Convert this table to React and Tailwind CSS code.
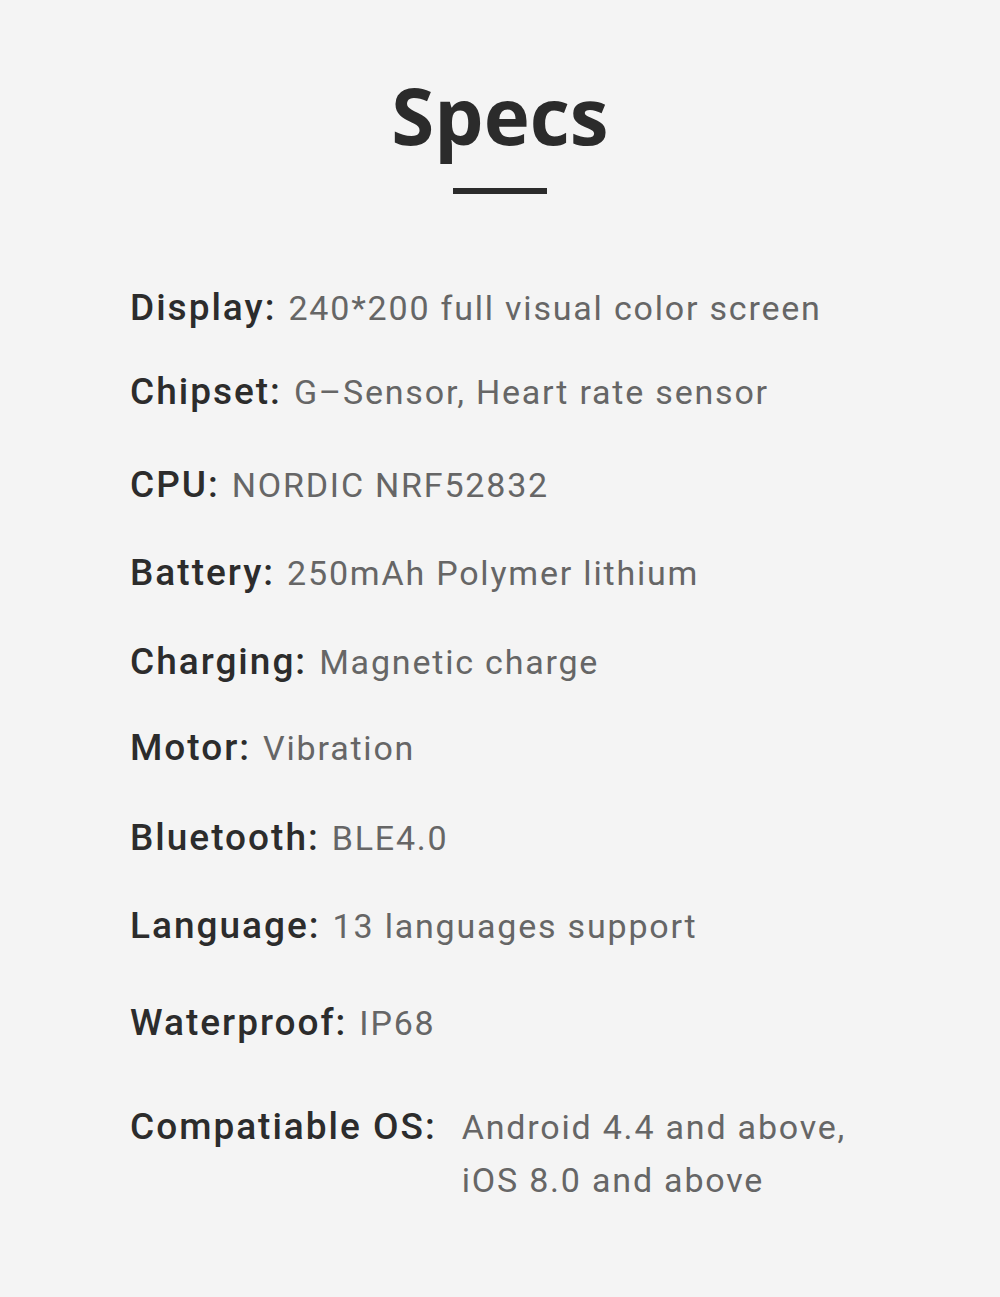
import React from "react";

const specs = [
    { label: "Display:", value: "240*200 full visual color screen", mt: "mt-0" },
    { label: "Chipset:", value: "G–Sensor, Heart rate sensor", mt: "mt-[46px]" },
    { label: "CPU:", value: "NORDIC NRF52832", mt: "mt-[55px]" },
    { label: "Battery:", value: "250mAh Polymer lithium", mt: "mt-[50px]" },
    { label: "Charging:", value: "Magnetic charge", mt: "mt-[51px]" },
    { label: "Motor:", value: "Vibration", mt: "mt-[48px]" },
    { label: "Bluetooth:", value: "BLE4.0", mt: "mt-[52px]" },
    { label: "Language:", value: "13 languages support", mt: "mt-[50px]" },
    { label: "Waterproof:", value: "IP68", mt: "mt-[59px]" },
];

export default function App() {
    return (
        <main className="w-[1000px] h-[1297px] bg-[#f4f4f4] font-['Roboto',sans-serif]">
            {/* Title */}
            <div className="flex flex-col items-center pt-[76px]">
                <h1 className="font-['Open_Sans',sans-serif] font-bold text-[78px] leading-none text-[#2b2b2b]">
                    Specs
                </h1>
                <div className="mt-[34px] w-[94px] h-[6px] bg-[#2b2b2b]" />
            </div>

            {/* Spec list */}
            <div className="pl-[130px] pt-[86px] flex flex-col">
                {specs.map((s) => (
                    <div key={s.label} className={`flex items-baseline h-[38px] ${s.mt}`}>
                        <span className="text-[37px] font-medium text-[#2c2c2c] tracking-[2px]">{s.label}</span>
                        <span className="ml-[12px] text-[34px] text-[#666666] tracking-[1.8px]">{s.value}</span>
                    </div>
                ))}
                <div className="flex items-baseline mt-[66px]">
                    <span className="text-[37px] font-medium text-[#2c2c2c] tracking-[2px]">Compatiable OS:</span>
                    <div className="ml-[25px] flex flex-col text-[34px] text-[#666666] tracking-[1.8px] leading-[53px]">
                        <span>Android 4.4 and above,</span>
                        <span>iOS 8.0 and above</span>
                    </div>
                </div>
            </div>
        </main>
    );
}
